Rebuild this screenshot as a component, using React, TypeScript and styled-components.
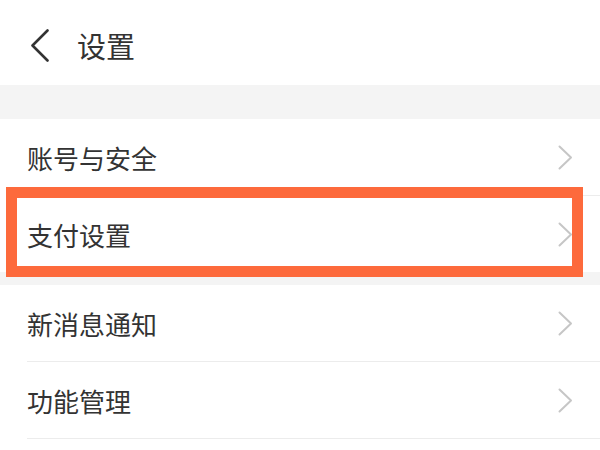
import React from "react";
import styled, { createGlobalStyle } from "styled-components";

const Global = createGlobalStyle`
  html, body { margin: 0; padding: 0; background: #ffffff; }
  body { font-family: "Noto Sans CJK SC", "Noto Sans", sans-serif; color: #333333; }
`;

const Page = styled.div`
  width: 600px;
  height: 450px;
  overflow: hidden;
  background: #ffffff;
  display: flex;
  flex-direction: column;
`;

const Header = styled.header`
  height: 85px;
  display: flex;
  align-items: center;
  padding: 6px 0 0 30px;
  box-sizing: border-box;
  gap: 28px;
`;

const Title = styled.h1`
  margin: 0;
  font-size: 29px;
  font-weight: 400;
  line-height: 1;
  color: #333333;
`;

const Band = styled.div<{ $h: number }>`
  height: ${(p) => p.$h}px;
  background: #f4f4f4;
  flex: none;
`;

const Group = styled.div`
  display: flex;
  flex-direction: column;
`;

const Row = styled.div`
  position: relative;
  padding-left: 27px;
  flex: none;
`;

const RowInner = styled.div<{ $divider: boolean }>`
  height: 76px;
  display: flex;
  align-items: center;
  justify-content: space-between;
  padding-right: 27px;
  border-bottom: ${(p) => (p.$divider ? "1px solid #ececec" : "none")};
`;

const Label = styled.span`
  font-size: 26px;
  line-height: 1;
  color: #333333;
  margin-top: 1px;
`;

const Highlight = styled.div`
  position: absolute;
  left: 6px;
  top: -9px;
  width: 577px;
  height: 90px;
  box-sizing: border-box;
  border: 11px solid #fd6a3c;
  pointer-events: none;
`;

const BackIcon = () => (
  <svg width="19" height="33" viewBox="0 0 19 33" fill="none">
    <polyline points="17.5,1.5 2.5,16.5 17.5,31.5" stroke="#333333" strokeWidth="2.6" strokeLinecap="round" strokeLinejoin="round" />
  </svg>
);

const Arrow = () => (
  <svg width="15" height="25" viewBox="0 0 15 25" fill="none">
    <polyline points="1.5,1.5 13,12.5 1.5,23.5" stroke="#c6c6c6" strokeWidth="2" strokeLinecap="round" strokeLinejoin="round" />
  </svg>
);

const Item = ({ label, divider, highlight }: { label: string; divider: boolean; highlight?: boolean }) => (
  <Row>
    <RowInner $divider={divider}>
      <Label>{label}</Label>
      <Arrow />
    </RowInner>
    {highlight && <Highlight />}
  </Row>
);

export default function App() {
  return (
    <>
      <Global />
      <Page>
        <Header>
          <BackIcon />
          <Title>设置</Title>
        </Header>
        <Band $h={34} />
        <Group>
          <Item label="账号与安全" divider />
          <Item label="支付设置" divider={false} highlight />
        </Group>
        <Band $h={13} />
        <Group>
          <Item label="新消息通知" divider />
          <Item label="功能管理" divider />
        </Group>
      </Page>
    </>
  );
}
